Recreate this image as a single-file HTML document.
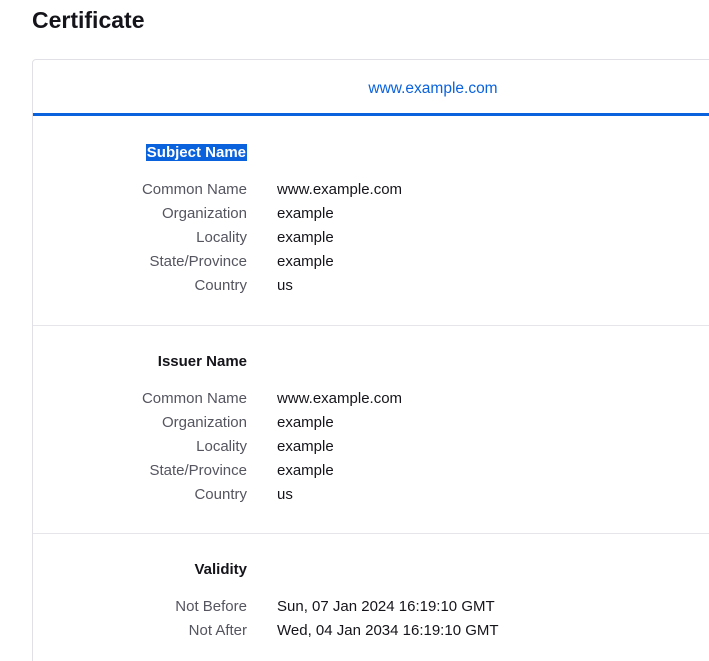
<!DOCTYPE html>
<html><head><meta charset="utf-8"><style>
html,body{margin:0;width:709px;height:661px;overflow:hidden}
body{background:#fff;font-family:"Liberation Sans",sans-serif;position:relative}
h1{position:absolute;left:32px;top:5px;margin:0;font-size:23px;line-height:30px;font-weight:bold;color:#15141a}
.card{position:absolute;left:32px;top:59px;width:700px;height:640px;border:1px solid #e0e0e6;border-radius:4px}
.tab{position:absolute;left:33px;top:78px;width:800px;text-align:center;font-size:15.5px;line-height:22px;color:#0a62dd}
.bl{position:absolute;left:33px;top:113px;width:680px;height:3px;background:#0a62dd}
.sep{position:absolute;left:33px;width:680px;height:1px;background:#e6e6ea}
.l{position:absolute;right:462px;font-size:15px;line-height:24px;color:#555560;white-space:nowrap}
.h{color:#15141a;font-weight:bold}
.v{position:absolute;left:277px;font-size:15px;line-height:24px;color:#15141a;white-space:nowrap}
.sel{background:#0a62dd;color:#fff;padding:0 1px}
</style></head><body>
<h1>Certificate</h1>
<div class="card"></div>
<div class="tab">www.example.com</div>
<div class="bl"></div>
<div class="l h" style="top:141px"><span class="sel">Subject Name</span></div>
<div class="l" style="top:178px">Common Name</div><div class="v" style="top:178px">www.example.com</div>
<div class="l" style="top:202px">Organization</div><div class="v" style="top:202px">example</div>
<div class="l" style="top:226px">Locality</div><div class="v" style="top:226px">example</div>
<div class="l" style="top:250px">State/Province</div><div class="v" style="top:250px">example</div>
<div class="l" style="top:274px">Country</div><div class="v" style="top:274px">us</div>
<div class="sep" style="top:325px"></div>
<div class="l h" style="top:350px">Issuer Name</div>
<div class="l" style="top:387px">Common Name</div><div class="v" style="top:387px">www.example.com</div>
<div class="l" style="top:411px">Organization</div><div class="v" style="top:411px">example</div>
<div class="l" style="top:435px">Locality</div><div class="v" style="top:435px">example</div>
<div class="l" style="top:459px">State/Province</div><div class="v" style="top:459px">example</div>
<div class="l" style="top:483px">Country</div><div class="v" style="top:483px">us</div>
<div class="sep" style="top:533px"></div>
<div class="l h" style="top:558px">Validity</div>
<div class="l" style="top:595px">Not Before</div><div class="v" style="top:595px">Sun, 07 Jan 2024 16:19:10 GMT</div>
<div class="l" style="top:619px">Not After</div><div class="v" style="top:619px">Wed, 04 Jan 2034 16:19:10 GMT</div>
</body></html>
